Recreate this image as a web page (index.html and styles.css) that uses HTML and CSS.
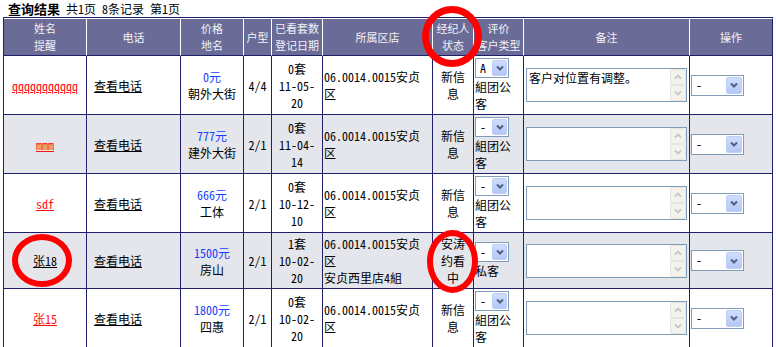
FILE: index.html
```html
<!DOCTYPE html>
<html lang="zh">
<head>
<meta charset="utf-8">
<title>查询结果</title>
<link rel="stylesheet" href="styles.css">
</head>
<body>
<div class="page">
  <div class="title"><b>查询结果</b> 共1页 8条记录 第1页</div>
  <table class="grid">
    <colgroup>
      <col class="c1"><col class="c2"><col class="c3"><col class="c4"><col class="c5">
      <col class="c6"><col class="c7"><col class="c8"><col class="c9"><col class="c10">
    </colgroup>
    <thead>
      <tr>
        <th>姓名<br>提醒</th><th>电话</th><th>价格<br>地名</th><th>户型</th><th>已看套数<br>登记日期</th>
        <th>所属区店</th><th>经纪人<br>状态</th><th>评价<br>客户类型</th><th>备注</th><th class="last">操作</th>
      </tr>
    </thead>
    <tbody>
      <tr>
        <td class="name"><a class="red" href="#">qqqqqqqqqqq</a></td>
        <td class="tel"><a href="#">查看电话</a></td>
        <td class="price"><span class="money">0元</span><br>朝外大街</td>
        <td class="type">4/4</td>
        <td class="seen">0套<br>11-05-<br>20</td>
        <td class="shop">06.0014.0015安贞区</td>
        <td class="state">新信息</td>
        <td class="kind"><span class="sel sel-type"><span class="sel-val">A</span><span class="sel-btn"><svg viewBox="0 0 10 10"><path d="M2 3.5L5 6.5L8 3.5"/></svg></span></span>組团公客</td>
        <td class="note"><div class="memo"><span class="memo-text">客户对位置有调整。</span><span class="memo-bar"><span class="sb-btn"><svg viewBox="0 0 10 10"><path d="M2 6.5L5 3.5L8 6.5"/></svg></span><span class="sb-btn"><svg viewBox="0 0 10 10"><path d="M2 3.5L5 6.5L8 3.5"/></svg></span></span></div></td>
        <td class="op"><span class="sel sel-op"><span class="sel-val">-</span><span class="sel-btn"><svg viewBox="0 0 10 10"><path d="M2 3.5L5 6.5L8 3.5"/></svg></span></span></td>
      </tr>
      <tr class="alt">
        <td class="name"><a class="red" href="#">mmm</a></td>
        <td class="tel"><a href="#">查看电话</a></td>
        <td class="price"><span class="money">777元</span><br>建外大街</td>
        <td class="type">2/1</td>
        <td class="seen">0套<br>11-04-<br>14</td>
        <td class="shop">06.0014.0015安贞区</td>
        <td class="state">新信息</td>
        <td class="kind"><span class="sel sel-type"><span class="sel-val">-</span><span class="sel-btn"><svg viewBox="0 0 10 10"><path d="M2 3.5L5 6.5L8 3.5"/></svg></span></span>組团公客</td>
        <td class="note"><div class="memo"><span class="memo-text"></span><span class="memo-bar"><span class="sb-btn"><svg viewBox="0 0 10 10"><path d="M2 6.5L5 3.5L8 6.5"/></svg></span><span class="sb-btn"><svg viewBox="0 0 10 10"><path d="M2 3.5L5 6.5L8 3.5"/></svg></span></span></div></td>
        <td class="op"><span class="sel sel-op"><span class="sel-val">-</span><span class="sel-btn"><svg viewBox="0 0 10 10"><path d="M2 3.5L5 6.5L8 3.5"/></svg></span></span></td>
      </tr>
      <tr>
        <td class="name"><a class="red" href="#">sdf</a></td>
        <td class="tel"><a href="#">查看电话</a></td>
        <td class="price"><span class="money">666元</span><br>工体</td>
        <td class="type">2/1</td>
        <td class="seen">0套<br>10-12-<br>10</td>
        <td class="shop">06.0014.0015安贞区</td>
        <td class="state">新信息</td>
        <td class="kind"><span class="sel sel-type"><span class="sel-val">-</span><span class="sel-btn"><svg viewBox="0 0 10 10"><path d="M2 3.5L5 6.5L8 3.5"/></svg></span></span>組团公客</td>
        <td class="note"><div class="memo"><span class="memo-text"></span><span class="memo-bar"><span class="sb-btn"><svg viewBox="0 0 10 10"><path d="M2 6.5L5 3.5L8 6.5"/></svg></span><span class="sb-btn"><svg viewBox="0 0 10 10"><path d="M2 3.5L5 6.5L8 3.5"/></svg></span></span></div></td>
        <td class="op"><span class="sel sel-op"><span class="sel-val">-</span><span class="sel-btn"><svg viewBox="0 0 10 10"><path d="M2 3.5L5 6.5L8 3.5"/></svg></span></span></td>
      </tr>
      <tr class="alt">
        <td class="name"><a class="plain" href="#">张18</a></td>
        <td class="tel"><a href="#">查看电话</a></td>
        <td class="price"><span class="money">1500元</span><br>房山</td>
        <td class="type">2/1</td>
        <td class="seen">1套<br>10-02-<br>20</td>
        <td class="shop">06.0014.0015安贞区<br>安贞西里店4組</td>
        <td class="state">安涛约看中</td>
        <td class="kind"><span class="sel sel-type"><span class="sel-val">-</span><span class="sel-btn"><svg viewBox="0 0 10 10"><path d="M2 3.5L5 6.5L8 3.5"/></svg></span></span>私客</td>
        <td class="note"><div class="memo"><span class="memo-text"></span><span class="memo-bar"><span class="sb-btn"><svg viewBox="0 0 10 10"><path d="M2 6.5L5 3.5L8 6.5"/></svg></span><span class="sb-btn"><svg viewBox="0 0 10 10"><path d="M2 3.5L5 6.5L8 3.5"/></svg></span></span></div></td>
        <td class="op"><span class="sel sel-op"><span class="sel-val">-</span><span class="sel-btn"><svg viewBox="0 0 10 10"><path d="M2 3.5L5 6.5L8 3.5"/></svg></span></span></td>
      </tr>
      <tr>
        <td class="name"><a class="red" href="#">张15</a></td>
        <td class="tel"><a href="#">查看电话</a></td>
        <td class="price"><span class="money">1800元</span><br>四惠</td>
        <td class="type">2/1</td>
        <td class="seen">0套<br>10-02-<br>20</td>
        <td class="shop">06.0014.0015安贞区</td>
        <td class="state">新信息</td>
        <td class="kind"><span class="sel sel-type"><span class="sel-val">-</span><span class="sel-btn"><svg viewBox="0 0 10 10"><path d="M2 3.5L5 6.5L8 3.5"/></svg></span></span>組团公客</td>
        <td class="note"><div class="memo"><span class="memo-text"></span><span class="memo-bar"><span class="sb-btn"><svg viewBox="0 0 10 10"><path d="M2 6.5L5 3.5L8 6.5"/></svg></span><span class="sb-btn"><svg viewBox="0 0 10 10"><path d="M2 3.5L5 6.5L8 3.5"/></svg></span></span></div></td>
        <td class="op"><span class="sel sel-op"><span class="sel-val">-</span><span class="sel-btn"><svg viewBox="0 0 10 10"><path d="M2 3.5L5 6.5L8 3.5"/></svg></span></span></td>
      </tr>
    </tbody>
  </table>
  <span class="mark mark-head"></span>
  <span class="mark mark-name"></span>
  <span class="mark mark-state"></span>
</div>
</body>
</html>
```
FILE: styles.css
```css
* { box-sizing: border-box; }
html, body { margin: 0; padding: 0; background: #fff; }
body {
  font-family: "Noto Sans Mono CJK SC", "Noto Sans CJK SC", sans-serif;
  font-size: 12px;
  color: #000;
}
.page { position: relative; padding: 0 3px; height: 347px; overflow: hidden; }
.title { height: 17px; line-height: 17px; padding-left: 5px; white-space: pre; }
.title b { font-size: 13px; }

.grid {
  width: 770px;
  table-layout: fixed;
  border-collapse: separate;
  border-spacing: 0;
  border-top: 1px solid #1f1f6b;
  border-left: 1px solid #1f1f6b;
}
.c1 { width: 83px; } .c2 { width: 94px; } .c3 { width: 63px; } .c4 { width: 28px; }
.c5 { width: 51px; } .c6 { width: 110px; } .c7 { width: 41px; } .c8 { width: 50px; }
.c9 { width: 166px; } .c10 { width: 83px; }

.grid th {
  background: #6b6b98;
  color: #f3f3f6;
  font-family: "Noto Sans CJK SC", sans-serif;
  font-weight: normal;
  font-size: 11px;
  line-height: 17px;
  padding: 1px 1px;
  border-top: 1px solid #fff;
  border-right: 1px solid #fff;
  border-bottom: 1px solid #1f1f6b;
  text-align: center;
  vertical-align: middle;
}
.grid th.last { border-right-color: #1f1f6b; }

.grid td {
  line-height: 17px;
  padding: 2px;
  border-right: 1px solid #1f1f6b;
  border-bottom: 1px solid #1f1f6b;
  vertical-align: middle;
  background: #fff;
}
.grid tr.alt td { background: #e5e6eb; }

.name, .price, .type, .seen, .state { text-align: center; }
.tel { padding-left: 7px !important; }
.shop { padding: 2px 3px 2px 1px !important; }
.state { padding: 2px 3px !important; }
.kind { padding: 2px 3px 2px 1px !important; }
.note { padding: 2px 2px 2px 2px !important; }
.op { padding: 2px 1px !important; }

a { color: #000; text-decoration: underline; }
a.red { color: #ff1010; }
.money { color: #1540ff; }

.sel {
  display: flex;
  border: 1px solid #7f9db9;
  background: #fff;
  height: 20px;
}
.sel-type { width: 34px; }
.sel-op { width: 53px; height: 21px; }
.sel-val { flex: 1; padding-left: 4px; line-height: 18px; }
.sel-btn {
  width: 15px;
  margin: 1px;
  border: 1px solid #bccdf6;
  border-radius: 2px;
  background: linear-gradient(#cfdcfd, #b4c7f5);
  display: flex;
  align-items: center;
  justify-content: center;
}
.sel-op .sel-btn { width: 16px; }
.sel-btn svg { width: 10px; height: 10px; }
.sel-btn path { fill: none; stroke: #4d6185; stroke-width: 2; }

.memo {
  display: flex;
  width: 161px;
  height: 34px;
  border: 1px solid #7f9db9;
  background: #fff;
}
.memo-text { flex: 1; padding: 0 2px; line-height: 17px; }
.memo-bar { width: 16px; display: flex; flex-direction: column; }
.sb-btn {
  flex: 1;
  border: 1px solid #e6e5de;
  border-radius: 2px;
  background: #f3f2ec;
  display: flex;
  align-items: center;
  justify-content: center;
}
.sb-btn svg { width: 10px; height: 10px; }
.sb-btn path { fill: none; stroke: #c8c7bf; stroke-width: 1.8; }

.mark {
  position: absolute;
  border: 7px solid #ff0000;
  border-radius: 50%;
  pointer-events: none;
}
.mark-head { left: 422px; top: 6px; width: 60px; height: 61px; }
.mark-name { left: 12px; top: 234px; width: 60px; height: 53px; border-width: 6px; }
.mark-state { left: 427px; top: 230px; width: 51px; height: 63px; border-width: 6px; }
```
